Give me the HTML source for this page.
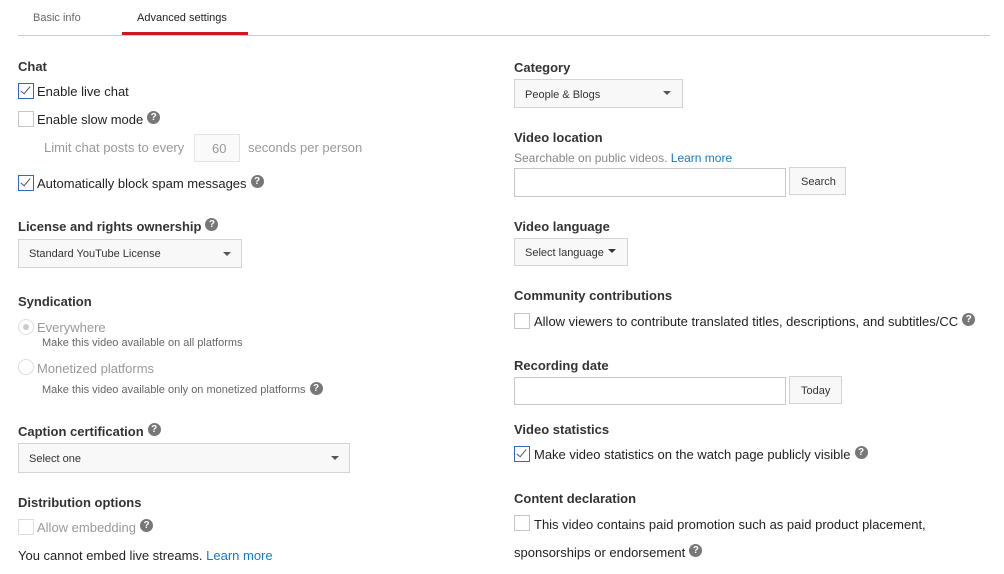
<!DOCTYPE html><html><head><style>
body{margin:0;width:1004px;height:574px;background:#fff;font-family:"Liberation Sans",sans-serif;position:relative;overflow:hidden;color:#222}
.a{position:absolute;white-space:nowrap;line-height:16px}
.t{font-size:13px}
.h{font-size:13px;font-weight:bold;color:#333}
.g{color:#999}
.s{font-size:11px}
.cb{position:absolute;width:14px;height:14px;border:1px solid #c6c6c6;background:#fff}
.cb.on{border-color:#36c;}
.cb.on:after{content:"";position:absolute;left:4px;top:0px;width:4px;height:9px;border:solid #555;border-width:0 1.5px 1.5px 0;transform:rotate(40deg)}
.q{display:inline-block;position:relative;top:-3px;margin-left:4px;width:13px;height:13px;border-radius:50%;background:#777;color:#fff;font-size:10px;font-weight:bold;text-align:center;line-height:13px;vertical-align:middle}
.box{position:absolute;border:1px solid #d3d3d3;background:#f8f8f8;box-sizing:border-box}
.in{position:absolute;border:1px solid #c8c8c8;background:#fff;box-sizing:border-box}
.arr{position:absolute;width:0;height:0;border-left:4px solid transparent;border-right:4px solid transparent;border-top:4px solid #555}
.lk{color:#167ac6}
.rd{position:absolute;width:14px;height:14px;border-radius:50%;border:1px solid #ddd;background:#fff}
</style></head><body>
<div class="a s" style="left:33px;top:10px;color:#666">Basic info</div>
<div class="a s" style="left:137px;top:10px;color:#222">Advanced settings</div>
<div style="position:absolute;left:18px;top:35px;width:972px;height:1px;background:#ccc"></div>
<div style="position:absolute;left:122px;top:32px;width:126px;height:3px;background:#cc181e"></div>

<div class="a h" style="left:18px;top:59px">Chat</div>
<div class="cb on" style="left:18px;top:83px"></div><div class="a t" style="left:37px;top:84px">Enable live chat</div>
<div class="cb" style="left:18px;top:111px"></div><div class="a t" style="left:37px;top:112px">Enable slow mode<span class="q">?</span></div>
<div class="a t g" style="left:44px;top:140px">Limit chat posts to every</div>
<div class="box" style="left:194px;top:134px;width:46px;height:28px;background:#fafafa;border-color:#e5e5e5"></div><div class="a t g" style="left:212px;top:141px">60</div>
<div class="a t g" style="left:248px;top:140px">seconds per person</div>
<div class="cb on" style="left:18px;top:175px"></div><div class="a t" style="left:37px;top:176px">Automatically block spam messages<span class="q">?</span></div>

<div class="a h" style="left:18px;top:219px">License and rights ownership<span class="q">?</span></div>
<div class="box" style="left:18px;top:239px;width:224px;height:29px"></div><div class="a s" style="left:29px;top:246px;color:#333">Standard YouTube License</div><div class="arr" style="left:223px;top:252px"></div>

<div class="a h" style="left:18px;top:294px">Syndication</div>
<div class="rd" style="left:18px;top:319px"></div><div style="position:absolute;left:23px;top:324px;width:6px;height:6px;border-radius:50%;background:#ccc"></div>
<div class="a t g" style="left:37px;top:320px">Everywhere</div>
<div class="a s" style="left:42px;top:335px;color:#666">Make this video available on all platforms</div>
<div class="rd" style="left:18px;top:359px"></div><div class="a t g" style="left:37px;top:361px">Monetized platforms</div>
<div class="a s" style="left:42px;top:382px;color:#666">Make this video available only on monetized platforms<span class="q" style="top:-2px">?</span></div>

<div class="a h" style="left:18px;top:424px">Caption certification<span class="q">?</span></div>
<div class="box" style="left:18px;top:443px;width:332px;height:30px"></div><div class="a s" style="left:29px;top:451px;color:#333">Select one</div><div class="arr" style="left:331px;top:456px"></div>

<div class="a h" style="left:18px;top:495px">Distribution options</div>
<div class="cb" style="left:18px;top:519px;border-color:#ddd"></div><div class="a t g" style="left:37px;top:520px">Allow embedding<span class="q">?</span></div>
<div class="a t" style="left:18px;top:548px">You cannot embed live streams. <span class="lk">Learn more</span></div>

<div class="a h" style="left:514px;top:60px">Category</div>
<div class="box" style="left:514px;top:79px;width:169px;height:29px"></div><div class="a s" style="left:525px;top:87px;color:#333">People &amp; Blogs</div><div class="arr" style="left:663px;top:91px"></div>
<div class="a h" style="left:514px;top:130px">Video location</div>
<div class="a" style="left:514px;top:150px;font-size:12px;color:#888">Searchable on public videos. <span class="lk">Learn more</span></div>
<div class="in" style="left:514px;top:168px;width:272px;height:29px"></div>
<div class="box" style="left:789px;top:167px;width:57px;height:28px"></div><div class="a s" style="left:801px;top:174px;color:#333">Search</div>
<div class="a h" style="left:514px;top:219px">Video language</div>
<div class="box" style="left:514px;top:238px;width:114px;height:28px"></div><div class="a s" style="left:525px;top:245px;color:#333">Select language</div><div class="arr" style="left:608px;top:249px;border-top-color:#333"></div>
<div class="a h" style="left:514px;top:288px">Community contributions</div>
<div class="cb" style="left:514px;top:313px"></div><div class="a t" style="left:534px;top:314px">Allow viewers to contribute translated titles, descriptions, and subtitles/CC<span class="q">?</span></div>
<div class="a h" style="left:514px;top:358px">Recording date</div>
<div class="in" style="left:514px;top:377px;width:272px;height:28px"></div>
<div class="box" style="left:789px;top:376px;width:53px;height:28px"></div><div class="a s" style="left:801px;top:383px;color:#333">Today</div>
<div class="a h" style="left:514px;top:422px">Video statistics</div>
<div class="cb on" style="left:514px;top:446px"></div><div class="a t" style="left:534px;top:447px">Make video statistics on the watch page publicly visible<span class="q">?</span></div>
<div class="a h" style="left:514px;top:491px">Content declaration</div>
<div class="cb" style="left:514px;top:515px"></div><div class="a t" style="left:534px;top:517px">This video contains paid promotion such as paid product placement,</div>
<div class="a t" style="left:514px;top:545px">sponsorships or endorsement<span class="q">?</span></div>
</body></html>
